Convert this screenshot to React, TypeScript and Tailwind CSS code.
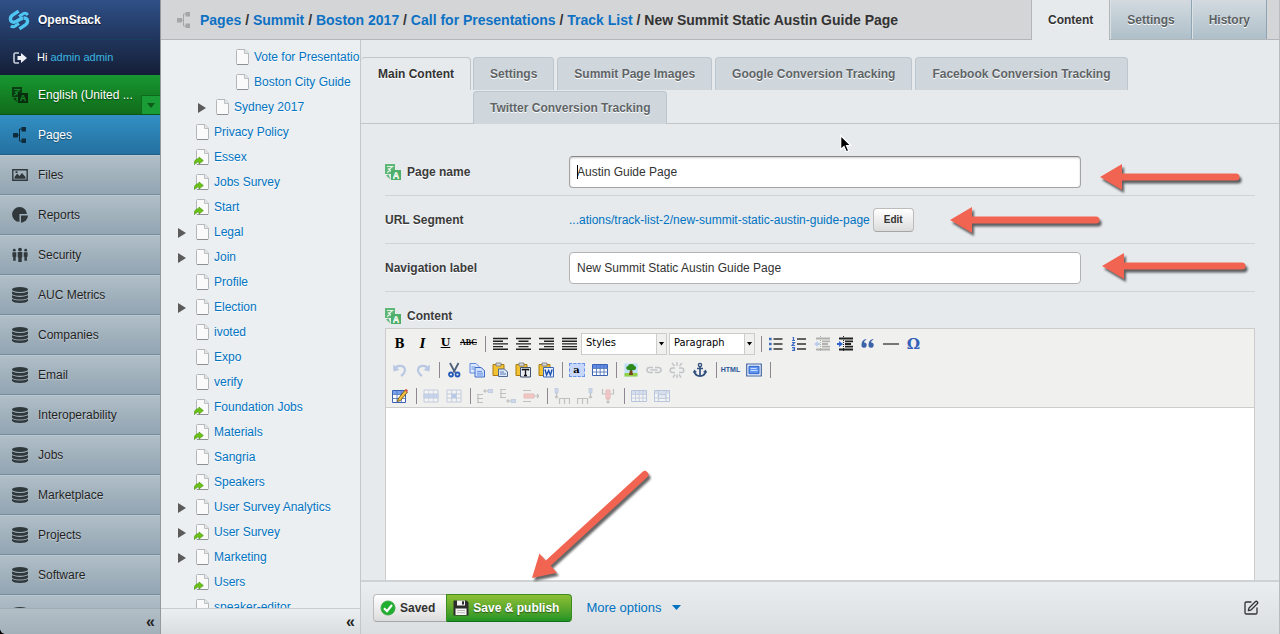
import type { ReactNode } from "react";
import { SquarePen } from "lucide-react";

/* ---------- icons ---------- */

function LogoIcon() {
  return (
    <svg width="22" height="22" viewBox="0 0 22 22" fill="none" stroke="#4fc5f1" strokeWidth="3.4">
      <path d="M10.600 2.200 4.600 6.200C1 8.800 2.200 13.400 6 13.200c3.400-.2 5.600-4.200 9.400-4" />
      <path d="M11.400 19.800l6-4c3.600-2.600 2.400-6.800-1.600-6.800" />
      <path d="M11 7.600l4.200-2.800c1.700-1 3.400-.4 4.600 1.200M11 14.400l-4.200 2.800c-1.200.8-2.800.6-4-.2" strokeWidth="3" />
    </svg>
  );
}

function LogoutIcon() {
  return (
    <svg width="16" height="16" viewBox="0 0 16 16">
      <path d="M7 3H3.500Q2 3 2 4.500v7Q2 13 3.500 13H7" fill="none" stroke="#c9d0dc" strokeWidth="1.600" />
      <path d="M5.500 6H9V3l6 5-6 5v-3H5.500z" fill="#eef1f6" />
    </svg>
  );
}

function TranslateIcon({ back, front, ink }: { back: string; front: string; ink: string }) {
  return (
    <svg width="16" height="16" viewBox="0 0 16 16">
      <path d="M0 0h10v10H0z" fill={back} />
      <path d="M2 2.500h5.500L3.500 6M3 4.500l4.500 4M2 8.500l3-2" fill="none" stroke={ink} strokeWidth="1.100" />
      <path d="M6 6h10v10H6z" fill={front} />
      <text x="11" y="14.200" fontSize="9" fontWeight="700" textAnchor="middle" fill={ink} fontFamily="Liberation Sans, sans-serif">
        A
      </text>
      <path d="M1 11.500 3.500 10.500 5.500 15.500z" fill={back} />
    </svg>
  );
}

function SitemapIcon() {
  return (
    <svg width="16" height="16" viewBox="0 0 16 16" fill="currentColor">
      <path d="M1 6h5v4.500H1zM9.500 0H14v4.500H9.500zM9.500 11.500H14V16H9.500z" />
      <path d="M10 2H7.500v12H10M5 8.200h2.500" fill="none" stroke="currentColor" strokeWidth="1" />
    </svg>
  );
}

function FilesIcon() {
  return (
    <svg width="16" height="16" viewBox="0 0 16 16">
      <path d="M.8 2.800h14.400v10.400H.8z" fill="none" stroke="#30383c" strokeWidth="1.400" />
      <path d="M2.500 11.800V10l2.700-3.500L7.500 9 10 6l3.500 4v1.800zM3.500 4.300h2V6h-2z" fill="#30383c" />
    </svg>
  );
}

function ReportsIcon() {
  return (
    <svg width="16" height="16" viewBox="0 0 16 16" fill="#30383c">
      <path d="M7.500 0a7.300 7.300 0 0 1 7.400 7H7.500v7.800A7.400 7.400 0 0 1 7.500 0z" />
      <path d="M9 8.500h7a7.500 7.500 0 0 1-7 7.200z" />
    </svg>
  );
}

function SecurityIcon() {
  return (
    <svg width="16" height="16" viewBox="0 0 16 16" fill="#30383c">
      <circle cx="8" cy="2.600" r="1.900" />
      <path d="M5.700 5h4.600v5.500H9.700V15H6.300v-4.500H5.700z" />
      <circle cx="2.300" cy="3.200" r="1.400" />
      <path d="M.4 5.200h3.900v4.600h-.6v4H1.200v-4H.4z" />
      <circle cx="13.700" cy="3.200" r="1.400" />
      <path d="M11.700 5.200h3.900v4.600h-.7v4h-2.500v-4h-.7z" />
    </svg>
  );
}

function DatabaseIcon() {
  return (
    <svg width="16" height="16" viewBox="0 0 16 16" fill="#30383c">
      <ellipse cx="8" cy="2.500" rx="8" ry="2.500" />
      <path d="M0 4.500q8 3.200 16 0v2.300q-1.500 2-8 2T0 6.800z" />
      <path d="M0 8.300q8 3.200 16 0v2.200q-1.500 2-8 2t-8-2z" />
      <path d="M0 12q8 3.200 16 0v1.800q-1.500 2.200-8 2.200T0 13.800z" />
    </svg>
  );
}

function PageIcon({ redirect }: { redirect?: boolean }) {
  return (
    <svg width="16" height="16" viewBox="0 0 16 16" className="shrink-0">
      <path d="M3.500.5h7.500l3.500 3.700V14.500q0 1-1 1h-10q-1 0-1-1v-13q0-1 1-1z" fill="#fafafa" stroke="#b3b7b9" />
      <path d="M3 15.500h11" stroke="#8d9193" />
      <path d="M10.500.5v4h4" fill="#e4e6e7" stroke="#bcc0c2" />
      {redirect && (
        <path d="M.4 15.600C0 11.500 2 9.600 5 9.800V8l4.300 3.600L5 15v-1.900c-2-.2-3.400.7-4.600 2.500z" fill="#6cc417" stroke="#4c9412" strokeWidth=".7" />
      )}
    </svg>
  );
}

function Expander() {
  return (
    <svg width="8" height="10" viewBox="0 0 8 10" fill="#5b5b5b">
      <path d="M0 0l8 5-8 5z" />
    </svg>
  );
}

/* ---------- left menu ---------- */

const menu: { label: string; icon: ReactNode }[] = [
  { label: "Files", icon: <FilesIcon /> },
  { label: "Reports", icon: <ReportsIcon /> },
  { label: "Security", icon: <SecurityIcon /> },
  { label: "AUC Metrics", icon: <DatabaseIcon /> },
  { label: "Companies", icon: <DatabaseIcon /> },
  { label: "Email", icon: <DatabaseIcon /> },
  { label: "Interoperability", icon: <DatabaseIcon /> },
  { label: "Jobs", icon: <DatabaseIcon /> },
  { label: "Marketplace", icon: <DatabaseIcon /> },
  { label: "Projects", icon: <DatabaseIcon /> },
  { label: "Software", icon: <DatabaseIcon /> },
  { label: "", icon: <DatabaseIcon /> },
];

function SideMenu() {
  return (
    <aside className="z-10 flex w-[161px] shrink-0 flex-col border-r border-[#96999c] bg-[#a3b3be]">
      <div className="h-[75px] shrink-0 bg-linear-to-b from-[#2f5088] to-[#141f38] px-2">
        <div className="flex h-10 items-center gap-2 border-b border-[#19405a]">
          <LogoIcon />
          <a href="#home" className="font-bold text-white [text-shadow:0_1px_1px_#0b1530]">OpenStack</a>
        </div>
        <div className="flex h-[35px] items-center gap-[9px] pl-1 text-[11px] text-white">
          <LogoutIcon />
          <span>Hi <a href="#profile" className="text-[#3ab5e0]">admin admin</a></span>
        </div>
      </div>
      <button type="button" className="relative flex h-10 shrink-0 items-center gap-[10px] border-b border-[#0b5413] bg-linear-to-b from-[#179730] to-[#116c1b] pl-3 text-left text-white [text-shadow:0_1px_1px_#0a3d10]">
        <TranslateIcon back="#0a3d12" front="#072d0c" ink="#15842a" />
        English (United ...
        <span className="absolute right-0 bottom-0 flex h-[19px] w-[19px] items-center justify-center border-t border-l border-[#0f6a1e] bg-[#1a9c36]">
          <svg width="8" height="5" viewBox="0 0 8 5" fill="#0c5b19"><path d="M0 0h8L4 5z" /></svg>
        </span>
      </button>
      <nav className="flex min-h-0 flex-1 flex-col overflow-hidden">
        <a href="#pages" className="flex h-10 shrink-0 items-center gap-[10px] border-b border-[#1d5f86] bg-linear-to-b from-[#338fc4] to-[#2471a0] pl-3 text-white [text-shadow:0_1px_1px_#1c4a68]">
          <span className="text-[#0f2c3d]"><SitemapIcon /></span>
          Pages
        </a>
        {menu.map((m, i) => (
          <a key={i} href="#section" className="flex h-10 shrink-0 items-center gap-[10px] border-t border-b border-t-[#bcc8d0] border-b-[#748d9d] bg-linear-to-b from-[#b0bec7] to-[#92a5b2] pl-3 text-[#1f1f1f] [text-shadow:0_1px_1px_#c8d2d9]">
            {m.icon}
            {m.label}
          </a>
        ))}
      </nav>
      <div className="flex h-[26px] shrink-0 items-center justify-end border-t border-[#9dadb8] bg-linear-to-b from-[#b2bec6] to-[#a3b1bb] pr-[5px]">
        <button type="button" aria-label="Collapse menu" className="text-base leading-4 font-bold text-[#222]">«</button>
      </div>
    </aside>
  );
}

/* ---------- page tree ---------- */

type Node = { label: string; level?: 1 | 2; open?: boolean; redirect?: boolean };

const tree: Node[] = [
  { label: "Vote for Presentations", level: 2 },
  { label: "Boston City Guide", level: 2 },
  { label: "Sydney 2017", level: 1, open: true },
  { label: "Privacy Policy" },
  { label: "Essex", redirect: true },
  { label: "Jobs Survey", redirect: true },
  { label: "Start", redirect: true },
  { label: "Legal", open: true },
  { label: "Join", open: true },
  { label: "Profile" },
  { label: "Election", open: true },
  { label: "ivoted" },
  { label: "Expo" },
  { label: "verify" },
  { label: "Foundation Jobs", redirect: true },
  { label: "Materials", redirect: true },
  { label: "Sangria" },
  { label: "Speakers", redirect: true },
  { label: "User Survey Analytics", open: true },
  { label: "User Survey", open: true, redirect: true },
  { label: "Marketing", open: true },
  { label: "Users", redirect: true },
  { label: "speaker-editor" },
];

function PageTree() {
  return (
    <div className="flex w-[200px] shrink-0 flex-col border-r border-[#c4c7c9] bg-[#ebeff2]">
      <ul className="min-h-0 flex-1 overflow-hidden pt-1 pl-4">
        {tree.map((n) => (
          <li key={n.label} className={n.level === 2 ? "pl-10" : n.level === 1 ? "pl-5" : ""}>
            <div className="flex h-[25px] items-center">
              <span className="w-[17px] shrink-0 pt-[3px] pl-px">{n.open && <Expander />}</span>
              <PageIcon redirect={n.redirect} />
              <a href="#page" className="pl-1 whitespace-nowrap text-[#0073c1] [text-shadow:0_1px_0_#fff]">{n.label}</a>
            </div>
          </li>
        ))}
      </ul>
      <div className="flex h-[26px] shrink-0 items-center justify-end border-t border-[#c9cccf] bg-linear-to-b from-[#ebeff1] to-[#d9dde0] pr-[5px]">
        <button type="button" aria-label="Collapse tree" className="text-base leading-4 font-bold text-[#222]">«</button>
      </div>
    </div>
  );
}

/* ---------- header ---------- */

const crumbs = ["Pages", "Summit", "Boston 2017", "Call for Presentations", "Track List"];

function Header() {
  return (
    <header className="flex h-10 shrink-0 border-b border-[#b3b6b8] bg-[#d4d5d7]">
      <div className="flex min-w-0 flex-1 items-center pl-[15px]">
        <span className="pr-2 text-[#a5a6a8]"><SitemapIcon /></span>
        <h1 className="truncate text-sm font-bold text-[#333]">
          {crumbs.map((c) => (
            <span key={c}><a href="#crumb" className="text-[#0d71c4]">{c}</a> / </span>
          ))}
          New Summit Static Austin Guide Page
        </h1>
      </div>
      <nav className="flex pr-3 font-bold text-[#5a5f62] [text-shadow:0_1px_0_#fff]">
        <a href="#content" className="-mb-px flex items-center border-r border-l border-[#b3b6b8] bg-[#e6eaed] px-4 text-[#333]">Content</a>
        <a href="#settings" className="flex items-center border-r border-l border-l-[#dbe2e6] border-r-[#8fa5b3] bg-linear-to-b from-[#d3dae0] to-[#aebfc9] px-4">Settings</a>
        <a href="#history" className="flex items-center border-r border-l border-l-[#dbe2e6] border-r-[#8fa5b3] bg-linear-to-b from-[#d3dae0] to-[#aebfc9] px-4">History</a>
      </nav>
    </header>
  );
}

/* ---------- rich text toolbar ---------- */

function Tool({ label, faded, children }: { label: string; faded?: boolean; children: ReactNode }) {
  return (
    <button type="button" aria-label={label} className={`flex h-5 w-[23px] shrink-0 items-center justify-center text-black ${faded ? "opacity-30" : ""}`}>
      {children}
    </button>
  );
}

function Sep() {
  return <span className="mr-[2px] ml-[5px] h-4 w-px shrink-0 bg-[#8e8792]" />;
}

function Svg({ children }: { children: ReactNode }) {
  return <svg width="16" height="16" viewBox="0 0 16 16" fill="none">{children}</svg>;
}

function AlignIcon({ d }: { d: string }) {
  return <Svg><path d={d} stroke="#222" strokeWidth="1.400" /></Svg>;
}

function Picker({ label }: { label: string }) {
  return (
    <span className="relative mr-px ml-px flex h-[22px] w-[86px] shrink-0">
      <select aria-label={label} className="w-full appearance-none border border-[#ccc] bg-white pl-1 font-['DejaVu_Sans_Condensed','DejaVu_Sans',sans-serif] text-[11px] text-black">
        <option>{label}</option>
      </select>
      <span className="pointer-events-none absolute inset-y-px right-px flex w-[10px] items-center justify-center border-l border-[#ccc] bg-[#f0f0ee]">
        <svg width="5" height="4" viewBox="0 0 5 4"><path d="M0 0h5L2.500 3.500z" /></svg>
      </span>
    </span>
  );
}

function Clipboard({ children }: { children: ReactNode }) {
  return (
    <Svg>
      <path d="M1 2.500h11v11H1z" fill="#f2c230" stroke="#a97b12" />
      <path d="M4 1h5v3H4z" fill="#d8d8d8" stroke="#777" strokeWidth=".8" />
      {children}
    </Svg>
  );
}

function GridIcon({ head }: { head?: boolean }) {
  return (
    <Svg>
      <path d="M.5 2.500h15v11H.5z" fill="#fff" stroke="#3b62b0" />
      <path d="M1 3h14v3H1z" fill={head ? "#5d8ae8" : "#9dbaf0"} />
      <path d="M.5 6.500h15M.5 10h15M4.500 3v10M8.200 3v10M12 3v10" stroke="#5678bb" strokeWidth=".9" />
    </Svg>
  );
}

function RowIcon({ rect, d }: { rect: string; d: string }) {
  return (
    <Svg>
      <path d={d} stroke="#555" strokeWidth="1.200" />
      <path d={rect} fill="#7ba0ea" stroke="#4a6dad" strokeWidth=".8" />
    </Svg>
  );
}

function Toolbar() {
  return (
    <div className="flex h-20 shrink-0 flex-col overflow-hidden border border-[#ccc] bg-[#f0f0ee] pt-px pl-0.5">
      <div className="flex h-[27px] shrink-0 items-center">
        <Tool label="Bold"><b className="font-['DejaVu_Serif',serif] text-[12px]">B</b></Tool>
        <Tool label="Italic"><b className="font-['DejaVu_Serif',serif] text-[12px] italic">I</b></Tool>
        <Tool label="Underline"><b className="font-['DejaVu_Serif',serif] text-[11px] underline">U</b></Tool>
        <Tool label="Strikethrough"><b className="font-['Liberation_Serif',serif] text-[8px] line-through">ABC</b></Tool>
        <Sep />
        <Tool label="Align left"><AlignIcon d="M1 2.500h15M1 5.200h10M1 7.900h15M1 10.600h10M1 13.300h15" /></Tool>
        <Tool label="Align center"><AlignIcon d="M1 2.500h15M3.500 5.200h10M1 7.900h15M3.500 10.600h10M1 13.300h15" /></Tool>
        <Tool label="Align right"><AlignIcon d="M1 2.500h15M6 5.200h10M1 7.900h15M6 10.600h10M1 13.300h15" /></Tool>
        <Tool label="Justify"><AlignIcon d="M1 2.500h15M1 5.200h15M1 7.900h15M1 10.600h15M1 13.300h15" /></Tool>
        <Picker label="Styles" />
        <Picker label="Paragraph" />
        <Sep />
        <Tool label="Bullets">
          <Svg>
            <path d="M5.500 3h9M5.500 8h9M5.500 13h9" stroke="#333" strokeWidth="1.300" />
            <path d="M1 1.700h2.600v2.600H1zM1 6.700h2.600v2.600H1zM1 11.700h2.600v2.600H1z" fill="#3f6bc4" />
          </Svg>
        </Tool>
        <Tool label="Numbering">
          <Svg>
            <path d="M6 3h9M6 8h9M6 13h9" stroke="#333" strokeWidth="1.300" />
            <path d="M1.500 1.500h1v3M1 4.500h3M1 6.500h2.500L1 9.500h3M1 11.500h2.500v3H1M1.500 13h2" stroke="#3f6bc4" strokeWidth="1.200" />
          </Svg>
        </Tool>
        <Tool label="Outdent" faded>
          <Svg>
            <path d="M2 2.500h14M8 5.300h8M8 8h6M8 10.700h8M2 13.500h14" stroke="#222" strokeWidth="1.800" />
            <path d="M6.500 0v16" stroke="#222" strokeDasharray="1 1" />
            <path d="M4 5 0 8l4 3V9h2V7H4z" fill="#3f7be0" />
          </Svg>
        </Tool>
        <Tool label="Indent">
          <Svg>
            <path d="M2 2.500h14M8 5.300h8M8 8h6M8 10.700h8M2 13.500h14" stroke="#222" strokeWidth="1.800" />
            <path d="M6.500 0v16" stroke="#222" strokeDasharray="1 1" />
            <path d="M2 5l4 3-4 3V9H0V7h2z" fill="#2d63d0" />
          </Svg>
        </Tool>
        <Tool label="Quote">
          <Svg>
            <path d="M6 3C3 3.500 1.500 6 1.500 9a2.600 2.600 0 1 0 2.600-2.400C4 5.500 4.800 4.400 6.400 3.800zM13 3c-3 .5-4.500 3-4.500 6a2.600 2.600 0 1 0 2.600-2.400c-.1-1.100.7-2.200 2.300-2.800z" fill="#3a62a8" />
          </Svg>
        </Tool>
        <Tool label="Rule"><Svg><path d="M0 8h16" stroke="#333" strokeWidth="1.300" /></Svg></Tool>
        <Tool label="Symbol"><b className="font-['DejaVu_Serif',serif] text-[15px] leading-4 text-[#3560b8]">Ω</b></Tool>
      </div>
      <div className="flex h-[26px] shrink-0 items-center">
        <Tool label="Undo" faded>
          <Svg><path d="M2 7c3-4 9-4 10.500-1 1.200 3-.5 6-3.500 8" stroke="#3a6cc8" strokeWidth="2.200" /><path d="M1 2.500 1.500 9.500 7.500 8z" fill="#3a6cc8" /></Svg>
        </Tool>
        <Tool label="Redo" faded>
          <Svg><path d="M14 7c-3-4-9-4-10.500-1-1.200 3 .5 6 3.500 8" stroke="#3a6cc8" strokeWidth="2.200" /><path d="M15 2.500 14.500 9.500 8.500 8z" fill="#3a6cc8" /></Svg>
        </Tool>
        <Sep />
        <Tool label="Cut">
          <Svg>
            <path d="M4 1l5 9.500M12.500 1 7.500 10.500" stroke="#4c5f7c" strokeWidth="1.800" />
            <circle cx="5" cy="12.500" r="2" stroke="#2458b8" strokeWidth="1.800" />
            <circle cx="11.500" cy="12.500" r="2" stroke="#2458b8" strokeWidth="1.800" />
          </Svg>
        </Tool>
        <Tool label="Copy">
          <Svg>
            <path d="M1 1.500h6l3 3v6.500H1z" fill="#dfeaff" stroke="#5c8adf" />
            <path d="M6 5.500h6l3.500 3v6.500H6z" fill="#cfe0ff" stroke="#3e6cc8" />
            <path d="M2.500 5h4M2.500 7h3M8 9.500h5M8 11.200h6M8 13h6" stroke="#5c8adf" strokeWidth=".9" />
          </Svg>
        </Tool>
        <Tool label="Paste"><Clipboard><path d="M6.500 7h6l3 3v4.500h-9z" fill="#dbe6f7" stroke="#4f6793" /><path d="M8 10h4M8 12h6" stroke="#5d7cb8" /></Clipboard></Tool>
        <Tool label="Paste as text"><Clipboard><path d="M5.500 5.500h10v9.500h-10z" fill="#e9eef5" stroke="#41506b" /><path d="M7.500 8.500v-1h6v1M10.500 7.500v6M9 13.500h3" stroke="#111" strokeWidth="1.300" /></Clipboard></Tool>
        <Tool label="Paste from Word"><Clipboard><path d="M5.500 5.500h10v9.500h-10z" fill="#e5efff" stroke="#3a67b5" /><path d="M7 7.500 8.600 13l2-4.500 1.800 4.500 1.700-5.500" stroke="#1d4fae" strokeWidth="1.400" /></Clipboard></Tool>
        <Sep />
        <Tool label="Select all">
          <span className="flex h-[14px] w-4 items-center justify-center border border-dashed border-[#6a92e8] bg-[#c6d7fb] font-['DejaVu_Serif',serif] text-[10px] leading-3 font-bold">a</span>
        </Tool>
        <Tool label="Table"><GridIcon head /></Tool>
        <Sep />
        <Tool label="Image">
          <Svg>
            <path d="M1.500 1.500h13v13h-13z" fill="#bfe0fb" />
            <path d="M1.500 11h13v3.500h-13z" fill="#8fd24a" />
            <path d="M7 8h2.200l.8 5H6z" fill="#7a4318" />
            <path d="M8 2c2-.4 3 .8 3.200 1.800 1.800.2 2.300 2 1.500 3.200-.8 1.400-2.300 1.200-2.800 1-1.200.9-2.800.9-3.600 0-1.600.4-3-.4-3.100-1.900 0-1.300.9-2 1.900-2.100C5.300 2.600 6.500 1.900 8 2z" fill="#2f8a1c" />
          </Svg>
        </Tool>
        <Tool label="Link" faded>
          <Svg><path d="M7 5.500H3.500a2.500 2.500 0 0 0 0 5H7M9 5.500h3.500a2.500 2.500 0 0 1 0 5H9M4.500 8h7" stroke="#5a6374" strokeWidth="1.700" /></Svg>
        </Tool>
        <Tool label="Unlink" faded>
          <Svg><path d="M6 6H3.500a2.300 2.300 0 0 0 0 4.600H6M10 6h2.500a2.300 2.300 0 0 1 0 4.600H10M8 0v4M3 1l2.500 3M13 1l-2.500 3M8 12.500v3.500M4 15.500l2-3M12 15.500l-2-3" stroke="#5a6374" strokeWidth="1.500" /></Svg>
        </Tool>
        <Tool label="Anchor">
          <Svg>
            <circle cx="8" cy="3" r="1.600" stroke="#35517f" strokeWidth="1.400" />
            <path d="M8 4.800V14M5 6.500h6" stroke="#35517f" strokeWidth="1.700" />
            <path d="M2.500 9c.3 3.300 2.500 5 5.500 5s5.200-1.700 5.500-5" stroke="#35517f" strokeWidth="1.900" />
            <path d="M.8 11 2.300 7.500 5 10zM15.200 11l-1.500-3.500L11 10z" fill="#35517f" />
          </Svg>
        </Tool>
        <Sep />
        <Tool label="Source"><span className="text-[7px] font-bold text-[#2a5599]">HTML</span></Tool>
        <Tool label="Fullscreen">
          <Svg>
            <path d="M.7 2h14.600v12H.7z" fill="#e9f1ff" stroke="#47689f" strokeWidth="1.200" />
            <path d="M3 4.300h10v7.400H3z" fill="#5f95f2" stroke="#2f62c6" />
            <path d="M4.500 6.500h6M4.500 8.500h7" stroke="#c6dbff" />
          </Svg>
        </Tool>
        <Sep />
      </div>
      <div className="flex h-[26px] shrink-0 items-center">
        <Tool label="Table properties">
          <Svg>
            <path d="M.5 2.500h13v12H.5z" fill="#fff" stroke="#3b62b0" />
            <path d="M1 3h12v3H1z" fill="#7aa2f0" />
            <path d="M.5 6.500h13M.5 10.500h13M5 3v11M9.300 3v11" stroke="#5678bb" strokeWidth=".9" />
            <path d="M6 11 13 2l2.500 2-7 8.500-3 1z" fill="#f1bd3a" stroke="#6d5320" strokeWidth=".9" />
            <path d="M12.500 2.500 14 .8l2 1.700-1.300 1.800z" fill="#d2574a" />
          </Svg>
        </Tool>
        <Sep />
        <Tool label="Row properties" faded><Svg><path d="M1 2h14v12H1z" fill="#fff" stroke="#5678bb" /><path d="M1 6h14v4H1z" fill="#6b96ee" stroke="#5678bb" /><path d="M5.700 2v12M10.300 2v12" stroke="#5678bb" strokeWidth=".7" /></Svg></Tool>
        <Tool label="Cell properties" faded><Svg><path d="M1 2h14v12H1zM1 6h14M1 10h14M5.700 2v12M10.300 2v12" fill="#fff" stroke="#5678bb" /><path d="M5.700 6h4.600v4H5.700z" fill="#3a6fe0" /></Svg></Tool>
        <Sep />
        <Tool label="Row before" faded><RowIcon rect="M11 1.500h5v3h-5z" d="M11 3H7M8.500 1.500 7 3l1.500 1.500M0 6.500h6M0 10.500h6M0 14.500h6M1 6v9" /></Tool>
        <Tool label="Row after" faded><RowIcon rect="M11 11.500h5v3h-5z" d="M11 13H7M8.500 11.500 7 13l1.500 1.500M0 1.500h6M0 5.500h6M0 9.500h6M1 1v9" /></Tool>
        <Tool label="Delete row" faded><Svg><path d="M0 2.500h8M0 13.500h8M11 8h5M14 6l2 2-2 2" stroke="#555" strokeWidth="1.200" /><path d="M1 6h10v4H1z" fill="#f06a5f" stroke="#c44" /></Svg></Tool>
        <Sep />
        <Tool label="Column before" faded><RowIcon rect="M1 0h3v5H1z" d="M2.500 5v5M1 8.500 2.500 10 4 8.500M5.500 16v-5.500h10V16M10.500 10.500V16" /></Tool>
        <Tool label="Column after" faded><RowIcon rect="M12 0h3v5h-3z" d="M13.500 5v5M12 8.500l1.500 1.500L15 8.500M.5 16v-5.500h10V16M5.500 10.500V16" /></Tool>
        <Tool label="Delete column" faded><Svg><path d="M2.500 1v5H6M13.500 1v5H10M8 11v4M6.500 13.500 8 15l1.500-1.500" stroke="#555" strokeWidth="1.200" /><path d="M6 2h4v9H6z" fill="#f06a5f" stroke="#c44" /></Svg></Tool>
        <Sep />
        <Tool label="Split cells" faded><GridIcon /></Tool>
        <Tool label="Merge cells" faded><Svg><path d="M.5 2.500h15v11H.5z" fill="#fff" stroke="#3b62b0" /><path d="M1 3h14v3H1z" fill="#9dbaf0" /><path d="M4 6.500h8v4H4z" fill="#c7d8f8" stroke="#5678bb" /><path d="M.5 10h3M12 10h3M4.500 3v10M12 3v10" stroke="#5678bb" /></Svg></Tool>
      </div>
    </div>
  );
}

/* ---------- form ---------- */

const tabs = [
  "Settings",
  "Summit Page Images",
  "Google Conversion Tracking",
  "Facebook Conversion Tracking",
  "Twitter Conversion Tracking",
];

function FieldLabel({ htmlFor, translated, children }: { htmlFor: string; translated?: boolean; children: ReactNode }) {
  return (
    <label htmlFor={htmlFor} className="flex w-[184px] shrink-0 items-center gap-1.5 font-bold text-[#3b3b3b] [text-shadow:0_1px_0_#fff]">
      {translated && <TranslateIcon back="#5fb777" front="#4fae69" ink="#e4f3e8" />}
      {children}
    </label>
  );
}

function EditForm() {
  return (
    <div className="flex min-h-0 flex-1 flex-col overflow-hidden">
      <nav className="flex shrink-0 items-start gap-0.5 border-b border-[#c0c5c8] pt-[17px] font-bold [text-shadow:0_1px_0_#fff]">
        <a href="#main" className="flex h-[33px] shrink-0 items-center rounded-t border-t border-r border-[#c0c5c8] px-4 pl-[17px] text-[#333]">Main Content</a>
        <div className="-mb-px flex flex-wrap gap-x-[3px] gap-y-px">
          {tabs.map((t) => (
            <a key={t} href="#tab" className="flex h-[33px] items-center rounded-t border-t border-r border-l border-[#bcc6cc] bg-[#cfd7dd] px-4 text-[#5f6467]">{t}</a>
          ))}
        </div>
      </nav>
      <form className="flex min-h-0 flex-1 flex-col px-6 pt-6">
        <div className="flex h-12 shrink-0 items-center border-b border-[#cfd3d6]">
          <FieldLabel htmlFor="name" translated>Page name</FieldLabel>
          <span className="relative w-full max-w-[512px]">
            <input id="name" type="text" defaultValue="Austin Guide Page" className="block h-8 w-full rounded border border-[#a3a3a3] border-t-[#888] bg-white px-[7px] text-[#333] shadow-[inset_0_1px_2px_#ccc] outline-none" />
            <span className="absolute top-[9px] left-2 h-[14px] w-px bg-black" />
          </span>
        </div>
        <div className="flex h-12 shrink-0 items-center border-b border-[#cfd3d6]">
          <FieldLabel htmlFor="edit-url">URL Segment</FieldLabel>
          <a href="#preview" className="text-[#0073c1]">...ations/track-list-2/new-summit-static-austin-guide-page</a>
          <button id="edit-url" type="button" className="ml-[3px] h-6 rounded border border-[#bcbcbc] border-b-[#a6a6a6] bg-linear-to-b from-white to-[#dcdcdc] px-[10px] text-[10px] font-bold text-[#333]">Edit</button>
        </div>
        <div className="flex h-12 shrink-0 items-center border-b border-[#cfd3d6]">
          <FieldLabel htmlFor="nav">Navigation label</FieldLabel>
          <input id="nav" type="text" defaultValue="New Summit Static Austin Guide Page" className="h-8 w-full max-w-[512px] rounded border border-[#b3b3b3] bg-white px-[7px] text-[#333] outline-none" />
        </div>
        <div className="flex h-9 shrink-0 items-center pt-3">
          <FieldLabel htmlFor="body" translated>Content</FieldLabel>
        </div>
        <Toolbar />
        <textarea id="body" className="min-h-0 w-full flex-1 resize-none border-r border-l border-[#ccc] bg-white outline-none" />
      </form>
    </div>
  );
}

function ActionBar() {
  return (
    <div className="flex h-[54px] shrink-0 items-center border-t-2 border-[#cfd2d5] bg-linear-to-b from-[#ebeef1] to-[#dadee1] pr-5 pl-3">
      <button type="button" className="flex h-7 items-center gap-1 rounded-l border border-r-0 border-[#bcbcbc] border-b-[#a6a6a6] bg-linear-to-b from-white to-[#dcdcdc] pr-[11px] pl-1.5 font-bold text-[#333]">
        <svg width="16" height="16" viewBox="0 0 16 16">
          <circle cx="8" cy="8" r="7" fill="#1fae2d" stroke="#3fa848" />
          <path d="M4 8.300 7 11.200 12 5" fill="none" stroke="#fff" strokeWidth="2.200" />
        </svg>
        Saved
      </button>
      <button type="button" className="flex h-7 items-center gap-1 rounded-r border border-[#3d8c22] border-b-[#14701a] bg-linear-to-b from-[#8cbf35] to-[#1c9426] pr-3 pl-1.5 font-bold text-white [text-shadow:0_1px_1px_#2c5a18]">
        <svg width="16" height="16" viewBox="0 0 16 16">
          <path d="M1 .5h12.500L15.500 2.500v13H.5V1z" fill="#2c2c2c" />
          <path d="M4 .5h8v5H4zM2.500 8.500h11V15h-11z" fill="#f4f4f4" />
          <path d="M9 1.300h2v3.200H9z" fill="#2c2c2c" />
          <path d="M4 10.500h8M4 12.700h8" stroke="#bbb" />
        </svg>
        Save &amp; publish
      </button>
      <button type="button" className="ml-[14px] flex items-center gap-2.5 text-[13px] text-[#0073c1]">
        More options
        <svg width="9" height="5" viewBox="0 0 9 5" fill="#0073c1"><path d="M0 0h9L4.500 5z" /></svg>
      </button>
      <button type="button" aria-label="Edit mode" className="ml-auto text-[#333]"><SquarePen size={16} /></button>
    </div>
  );
}

/* ---------- callouts over the page ---------- */

const arrows = [
  { x: 1100, y: 177, angle: 0, length: 139 },
  { x: 950, y: 220, angle: 0, length: 149 },
  { x: 1102, y: 266, angle: 0, length: 143 },
  { x: 532, y: 578, angle: -42.500, length: 156 },
];

function Callouts() {
  return (
    <svg className="pointer-events-none absolute inset-0 z-20 h-full w-full" aria-hidden="true">
      {arrows.map((a) => (
        <g key={a.x} className="drop-shadow-[2px_3px_1px_rgb(0_0_0/0.6)]">
          <path
            transform={`translate(${a.x} ${a.y}) rotate(${a.angle})`}
            d={`M0 0 22-13V-3.600H${a.length - 3}a3.600 3.600 0 0 1 0 7.200H22V13z`}
            fill="#f26452"
          />
        </g>
      ))}
      <path transform="translate(840 135)" d="M.7.500v14l3.300-3 2.300 5.200 2.400-1-2.200-5.200h4.300z" fill="#000" stroke="#fff" strokeWidth="1.200" />
    </svg>
  );
}

export default function App() {
  return (
    <div className="relative flex h-screen overflow-hidden bg-black font-['Liberation_Sans',Arial,sans-serif] text-xs">
      <div className="flex min-w-0 flex-1 overflow-hidden rounded-bl-md">
        <SideMenu />
        <div className="flex min-w-0 flex-1 flex-col border-r border-[#b9bcbe] bg-[#e6eaed]">
          <Header />
          <div className="flex min-h-0 flex-1">
            <PageTree />
            <main className="flex min-w-0 flex-1 flex-col">
              <EditForm />
              <ActionBar />
            </main>
          </div>
        </div>
      </div>
      <Callouts />
    </div>
  );
}
